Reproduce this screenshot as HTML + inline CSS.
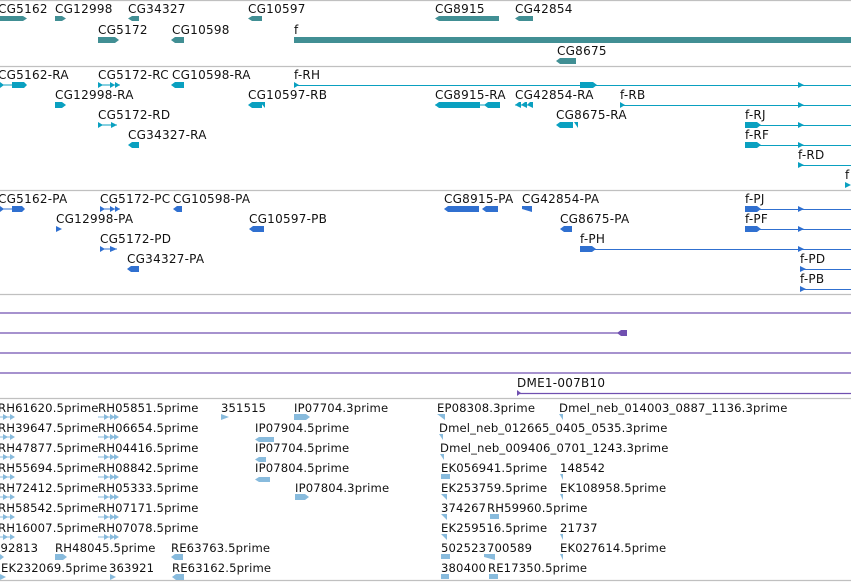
<!DOCTYPE html>
<html><head><meta charset="utf-8"><style>
html,body{margin:0;padding:0;background:#fff;overflow:hidden}
svg{display:block}
text{font-family:"DejaVu Sans","Liberation Sans",sans-serif;font-size:12px;fill:#111;letter-spacing:0.25px}
.e text{font-size:11.6px;letter-spacing:0.15px}
</style></head><body>
<svg width="851" height="582" viewBox="0 0 851 582" xmlns="http://www.w3.org/2000/svg">
<g stroke="#c0c0c0" stroke-width="1.3">
<line x1="0" y1="0.5" x2="851" y2="0.5"/><line x1="0" y1="66.5" x2="851" y2="66.5"/>
<line x1="0" y1="190.5" x2="851" y2="190.5"/><line x1="0" y1="294.5" x2="851" y2="294.5"/>
<line x1="0" y1="398.5" x2="851" y2="398.5"/><line x1="0" y1="580.5" x2="851" y2="580.5"/>
</g>
<g fill="#418f94">
<polygon points="0,16 23,16 27,18.5 23,21 0,21"/>
<polygon points="55,16 62,16 66,18.5 62,21 55,21"/>
<polygon points="132,16 139,16 139,21 132,21 128,18.5"/>
<polygon points="252,16 262,16 262,21 252,21 248,18.5"/>
<polygon points="439,16 499,16 499,21 439,21 435,18.5"/>
<polygon points="519,16 533,16 533,21 519,21 515,18.5"/>
<polygon points="98,37 115,37 119,40 115,43 98,43"/>
<polygon points="175,37 184,37 184,43 175,43 171,40"/>
<rect x="294" y="37" width="557" height="6"/>
<polygon points="560,58 576,58 576,64 560,64 556,61"/>
</g>
<text x="-2" y="13">CG5162</text><text x="55" y="13">CG12998</text><text x="128" y="13">CG34327</text><text x="248" y="13">CG10597</text><text x="435" y="13">CG8915</text><text x="515" y="13">CG42854</text>
<text x="98" y="34">CG5172</text><text x="172" y="34">CG10598</text><text x="294" y="34">f</text><text x="557" y="55">CG8675</text>
<g fill="#0aa0c0" stroke="#0aa0c0">
<g stroke-width="1"><line x1="0" y1="85" x2="12" y2="85"/><line x1="294" y1="85.5" x2="851" y2="85.5"/><line x1="98" y1="85" x2="120" y2="85"/><line x1="98" y1="125" x2="117" y2="125"/><line x1="620" y1="105.5" x2="851" y2="105.5"/><line x1="745" y1="125.5" x2="851" y2="125.5"/><line x1="745" y1="145.5" x2="851" y2="145.5"/><line x1="798" y1="165.5" x2="851" y2="165.5"/><line x1="435" y1="105" x2="500" y2="105"/><line x1="515" y1="105" x2="533" y2="105"/></g>
<g stroke="none">
<polygon points="12,82 24,82 27,85 24,88 12,88"/><polygon points="0,82 4,85 0,88"/>
<polygon points="98,82 103,85 98,88"/><polygon points="110,82 115,85 110,88"/><polygon points="115,82 120,85 115,88"/>
<polygon points="175,82 184,82 184,88 175,88 171,85"/>
<polygon points="294,82 299,85 294,88"/><polygon points="580,82 593,82 597,85 593,88 580,88"/><polygon points="798,82 804,85 798,88"/>
<polygon points="59,102 62,102 66,105 62,108 55,108 55,102"/>
<polygon points="252,102 262,102 262,108 252,108 248,105"/><polygon points="260,102 265,102 265,108"/>
<polygon points="439,102 480,102 480,108 439,108 435,105"/><polygon points="488,102 500,102 500,108 488,108 484,105"/>
<polygon points="519,102 521,102 521,108 515,105"/><polygon points="525,102 527,102 527,108 521,105"/><polygon points="530,102 533,102 533,108 527,105"/>
<polygon points="620,102 625,105 620,108"/><polygon points="798,102 804,105 798,108"/>
<polygon points="98,122 103,125 98,128"/><polygon points="111,122 117,125 111,128"/>
<polygon points="560,122 573,122 573,128 560,128 556,125"/><polygon points="574,122 578,122 578,128"/>
<rect x="745" y="122" width="12" height="6"/><polygon points="757,122 761,125 757,128"/><polygon points="798,122 804,125 798,128"/>
<polygon points="132,142 139,142 139,148 132,148 128,145"/>
<rect x="745" y="142" width="12" height="6"/><polygon points="757,142 761,145 757,148"/><polygon points="798,142 804,145 798,148"/>
<polygon points="798,162 804,165 798,168"/><polygon points="845,182 851,185 845,188"/>
</g></g>
<text x="-2" y="79">CG5162-RA</text><text x="98" y="79">CG5172-RC</text><text x="172" y="79">CG10598-RA</text><text x="294" y="79">f-RH</text>
<text x="55" y="99">CG12998-RA</text><text x="248" y="99">CG10597-RB</text><text x="435" y="99">CG8915-RA</text><text x="515" y="99">CG42854-RA</text><text x="620" y="99">f-RB</text>
<text x="98" y="119">CG5172-RD</text><text x="556" y="119">CG8675-RA</text><text x="745" y="119">f-RJ</text>
<text x="128" y="139">CG34327-RA</text><text x="745" y="139">f-RF</text><text x="798" y="159">f-RD</text><text x="845" y="179">f</text>
<g fill="#3070d0" stroke="#3070d0">
<g stroke-width="1"><line x1="0" y1="209" x2="12" y2="209"/><line x1="100" y1="209" x2="120" y2="209"/><line x1="100" y1="249" x2="117" y2="249"/><line x1="745" y1="209.5" x2="851" y2="209.5"/><line x1="745" y1="229.5" x2="851" y2="229.5"/><line x1="580" y1="249.5" x2="851" y2="249.5"/><line x1="800" y1="269.5" x2="851" y2="269.5"/><line x1="800" y1="289.5" x2="851" y2="289.5"/></g>
<g stroke="none">
<polygon points="12,206 22,206 25,209 22,212 12,212"/><polygon points="0,206 4,209 0,212"/>
<polygon points="100,206 105,209 100,212"/><polygon points="110,206 115,209 110,212"/><polygon points="115,206 120,209 115,212"/>
<polygon points="177,206 182,206 182,212 177,212 173,209"/>
<polygon points="448,206 479,206 479,212 448,212 444,209"/><polygon points="486,206 498,206 498,212 486,212 482,209"/>
<polygon points="522,206 532,206 532,212 522,209"/>
<polygon points="745,206 757,206 761,209 757,212 745,212"/><polygon points="798,206 804,209 798,212"/>
<polygon points="56,226 62,229 56,232"/>
<polygon points="253,226 264,226 264,232 253,232 249,229"/>
<polygon points="564,226 572,226 572,232 564,232 560,229"/>
<polygon points="745,226 757,226 761,229 757,232 745,232"/><polygon points="798,226 804,229 798,232"/>
<polygon points="100,246 105,249 100,252"/><polygon points="110,246 117,249 110,252"/>
<polygon points="580,246 592,246 596,249 592,252 580,252"/><polygon points="798,246 804,249 798,252"/>
<polygon points="131,266 139,266 139,272 131,272 127,269"/>
<polygon points="800,266 806,269 800,272"/><polygon points="800,286 806,289 800,292"/>
</g></g>
<text x="-2" y="203">CG5162-PA</text><text x="100" y="203">CG5172-PC</text><text x="173" y="203">CG10598-PA</text><text x="444" y="203">CG8915-PA</text><text x="522" y="203">CG42854-PA</text><text x="745" y="203">f-PJ</text>
<text x="56" y="223">CG12998-PA</text><text x="249" y="223">CG10597-PB</text><text x="560" y="223">CG8675-PA</text><text x="745" y="223">f-PF</text>
<text x="100" y="243">CG5172-PD</text><text x="580" y="243">f-PH</text>
<text x="127" y="263">CG34327-PA</text><text x="800" y="263">f-PD</text><text x="800" y="283">f-PB</text>
<g stroke="#7050b0" stroke-width="1.2"><line x1="0" y1="313" x2="851" y2="313"/><line x1="0" y1="333" x2="620" y2="333"/><line x1="0" y1="353" x2="851" y2="353"/><line x1="0" y1="373" x2="851" y2="373"/><line x1="517" y1="393.5" x2="851" y2="393.5"/></g>
<polygon fill="#7050b0" points="621,330 627,330 627,336 621,336 617,333"/>
<polygon fill="#7050b0" points="517,390 521,393 517,396"/>
<text x="517" y="387">DME1-007B10</text>
<g fill="#88bbdd">
<g id="a"><rect x="0" y="416.5" width="10" height="1"/><polygon points="3,414 8,417 3,420"/><polygon points="10,414 15,417 10,420"/></g>
<g id="b"><rect x="98" y="416.5" width="20" height="1"/><polygon points="104,414 109,417 104,420"/><polygon points="110,414 115,417 110,420"/><polygon points="114,414 119,417 114,420"/></g>
<use href="#a" y="20"/><use href="#a" y="40"/><use href="#a" y="60"/><use href="#a" y="80"/><use href="#a" y="100"/><use href="#a" y="120"/><polygon points="0,554 4,557 0,560"/><polygon points="0,574 6,577 0,580"/>
<use href="#b" y="20"/><use href="#b" y="40"/><use href="#b" y="60"/><use href="#b" y="80"/><use href="#b" y="100"/><use href="#b" y="120"/>
<polygon points="221,414 229,417 221,420"/><polygon points="294,414 306,414 310,417 306,420 294,420"/>
<polygon points="259,437 274,437 274,442 259,442 255,439.5"/><polygon points="259,457 266,457 266,462 259,462 255,459.5"/><polygon points="259,477 270,477 270,482 259,482 255,479.5"/>
<polygon points="295,494 305,494 309,497 305,500 295,500"/>
<polygon points="55,554 63,554 67,557 63,560 55,560"/><polygon points="175,554 183,554 183,560 175,560 171,557"/>
<polygon points="110,574 116,577 110,580"/><polygon points="176,574 184,574 184,580 176,580 172,577"/>
<polygon points="437,414 445,414 445,420"/><polygon points="559,414 563,414 563,420"/>
<polygon points="439,434 443,434 443,440"/><polygon points="440,454 444,454 444,460"/>
<rect x="441" y="474" width="9" height="5"/><polygon points="560,474 563,474 563,480"/>
<polygon points="441,494 447,494 447,500"/><polygon points="560,494 563,494 563,500"/>
<polygon points="441,514 447,514 447,520"/><rect x="490" y="514" width="9" height="5"/>
<polygon points="441,534 447,534 447,540"/><polygon points="560,534 563,534 563,540"/>
<rect x="441" y="554" width="9" height="5"/><polygon points="484,554 495,554 495,560 484,557"/><polygon points="560,554 563,554 563,560"/>
<rect x="441" y="574" width="8" height="5"/><rect x="489" y="574" width="9" height="5"/>
</g>
<g class="e">
<text x="-2" y="412">RH61620.5prime</text><text x="98" y="412">RH05851.5prime</text><text x="221" y="412">351515</text><text x="294" y="412">IP07704.3prime</text><text x="437" y="412">EP08308.3prime</text><text x="559" y="412">Dmel_neb_014003_0887_1136.3prime</text>
<text x="-2" y="432">RH39647.5prime</text><text x="98" y="432">RH06654.5prime</text><text x="255" y="432">IP07904.5prime</text><text x="439" y="432">Dmel_neb_012665_0405_0535.3prime</text>
<text x="-2" y="452">RH47877.5prime</text><text x="98" y="452">RH04416.5prime</text><text x="255" y="452">IP07704.5prime</text><text x="440" y="452">Dmel_neb_009406_0701_1243.3prime</text>
<text x="-2" y="472">RH55694.5prime</text><text x="98" y="472">RH08842.5prime</text><text x="255" y="472">IP07804.5prime</text><text x="441" y="472">EK056941.5prime</text><text x="560" y="472">148542</text>
<text x="-2" y="492">RH72412.5prime</text><text x="98" y="492">RH05333.5prime</text><text x="295" y="492">IP07804.3prime</text><text x="441" y="492">EK253759.5prime</text><text x="560" y="492">EK108958.5prime</text>
<text x="-2" y="512">RH58542.5prime</text><text x="98" y="512">RH07171.5prime</text><text x="441" y="512">374267</text><text x="487" y="512">RH59960.5prime</text>
<text x="-2" y="532">RH16007.5prime</text><text x="98" y="532">RH07078.5prime</text><text x="441" y="532">EK259516.5prime</text><text x="560" y="532">21737</text>
<text x="-7" y="552">192813</text><text x="55" y="552">RH48045.5prime</text><text x="171" y="552">RE63763.5prime</text><text x="441" y="552">502523</text><text x="487" y="552">700589</text><text x="560" y="552">EK027614.5prime</text>
<text x="1" y="572">EK232069.5prime</text><text x="109" y="572">363921</text><text x="172" y="572">RE63162.5prime</text><text x="441" y="572">380400</text><text x="488" y="572">RE17350.5prime</text>
</g>
</svg>
</body></html>
